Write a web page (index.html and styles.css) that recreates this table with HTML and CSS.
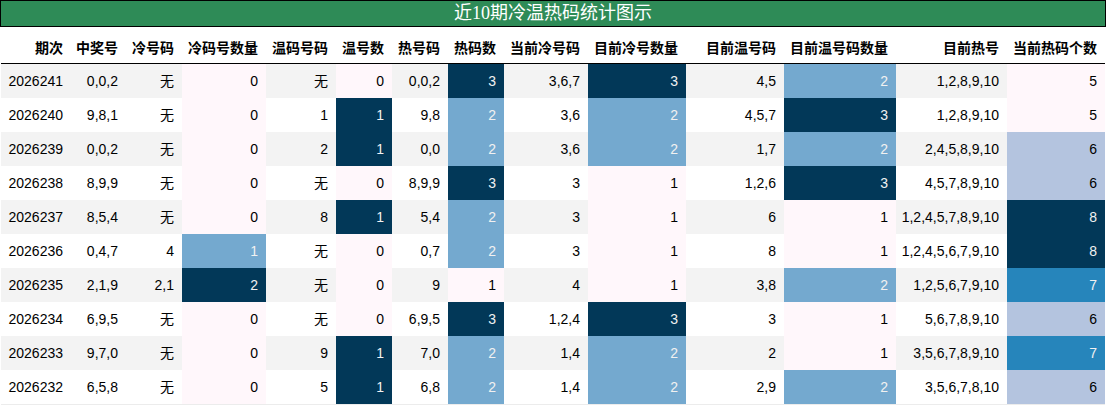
FILE: index.html
```html
<!DOCTYPE html>
<html lang="zh">
<head>
<meta charset="utf-8">
<title>近10期冷温热码统计图示</title>
<link rel="stylesheet" href="styles.css">
</head>
<body>
<div class="title">近10期冷温热码统计图示</div>
<table class="stats">
<colgroup>
<col class="w70"><col class="w55"><col class="w56"><col class="w84"><col class="w70"><col class="w56"><col class="w56"><col class="w56"><col class="w84"><col class="w98"><col class="w98"><col class="w112"><col class="w111"><col class="w98">
</colgroup>
<thead>
<tr><th>期次</th><th>中奖号</th><th>冷号码</th><th>冷码号数量</th><th>温码号码</th><th>温号数</th><th>热号码</th><th>热码数</th><th>当前冷号码</th><th>目前冷号数量</th><th>目前温号码</th><th>目前温号码数量</th><th>目前热号</th><th>当前热码个数</th></tr>
</thead>
<tbody>
<tr><td>2026241</td><td>0,0,2</td><td>无</td><td class="c0">0</td><td>无</td><td class="c0">0</td><td>0,0,2</td><td class="cn">3</td><td>3,6,7</td><td class="cn">3</td><td>4,5</td><td class="cl">2</td><td>1,2,8,9,10</td><td class="c0">5</td></tr>
<tr><td>2026240</td><td>9,8,1</td><td>无</td><td class="c0">0</td><td>1</td><td class="cn">1</td><td>9,8</td><td class="cl">2</td><td>3,6</td><td class="cl">2</td><td>4,5,7</td><td class="cn">3</td><td>1,2,8,9,10</td><td class="c0">5</td></tr>
<tr><td>2026239</td><td>0,0,2</td><td>无</td><td class="c0">0</td><td>2</td><td class="cn">1</td><td>0,0</td><td class="cl">2</td><td>3,6</td><td class="cl">2</td><td>1,7</td><td class="cl">2</td><td>2,4,5,8,9,10</td><td class="c6">6</td></tr>
<tr><td>2026238</td><td>8,9,9</td><td>无</td><td class="c0">0</td><td>无</td><td class="c0">0</td><td>8,9,9</td><td class="cn">3</td><td>3</td><td class="c0">1</td><td>1,2,6</td><td class="cn">3</td><td>4,5,7,8,9,10</td><td class="c6">6</td></tr>
<tr><td>2026237</td><td>8,5,4</td><td>无</td><td class="c0">0</td><td>8</td><td class="cn">1</td><td>5,4</td><td class="cl">2</td><td>3</td><td class="c0">1</td><td>6</td><td class="c0">1</td><td>1,2,4,5,7,8,9,10</td><td class="cn">8</td></tr>
<tr><td>2026236</td><td>0,4,7</td><td>4</td><td class="cl">1</td><td>无</td><td class="c0">0</td><td>0,7</td><td class="cl">2</td><td>3</td><td class="c0">1</td><td>8</td><td class="c0">1</td><td>1,2,4,5,6,7,9,10</td><td class="cn">8</td></tr>
<tr><td>2026235</td><td>2,1,9</td><td>2,1</td><td class="cn">2</td><td>无</td><td class="c0">0</td><td>9</td><td class="c0">1</td><td>4</td><td class="c0">1</td><td>3,8</td><td class="cl">2</td><td>1,2,5,6,7,9,10</td><td class="c7">7</td></tr>
<tr><td>2026234</td><td>6,9,5</td><td>无</td><td class="c0">0</td><td>无</td><td class="c0">0</td><td>6,9,5</td><td class="cn">3</td><td>1,2,4</td><td class="cn">3</td><td>3</td><td class="c0">1</td><td>5,6,7,8,9,10</td><td class="c6">6</td></tr>
<tr><td>2026233</td><td>9,7,0</td><td>无</td><td class="c0">0</td><td>9</td><td class="cn">1</td><td>7,0</td><td class="cl">2</td><td>1,4</td><td class="cl">2</td><td>2</td><td class="c0">1</td><td>3,5,6,7,8,9,10</td><td class="c7">7</td></tr>
<tr><td>2026232</td><td>6,5,8</td><td>无</td><td class="c0">0</td><td>5</td><td class="cn">1</td><td>6,8</td><td class="cl">2</td><td>1,4</td><td class="cl">2</td><td>2,9</td><td class="cl">2</td><td>3,5,6,7,8,10</td><td class="c6">6</td></tr>
</tbody>
</table>
</body>
</html>
```
FILE: styles.css
```css
html, body {
  margin: 0;
  padding: 0;
  background: #ffffff;
}

.title {
  box-sizing: border-box;
  width: 1106px;
  height: 27px;
  border: 1px solid #000000;
  background: #2e8b57;
  color: #ffffff;
  font-family: "Liberation Serif", "Noto Sans CJK SC", serif;
  font-size: 18px;
  line-height: 24px;
  text-align: center;
}

.stats {
  margin-left: 1px;
  width: 1104px;
  table-layout: fixed;
  border-collapse: collapse;
  border-spacing: 0;
  font-family: "Liberation Sans", "Noto Sans CJK SC", sans-serif;
  font-size: 14px;
  color: #000000;
  border-bottom: 1px solid #ececec;
}

.w55 { width: 55px; }
.w56 { width: 56px; }
.w70 { width: 70px; }
.w84 { width: 84px; }
.w98 { width: 98px; }
.w111 { width: 111px; }
.w112 { width: 112px; }

.stats th {
  box-sizing: border-box;
  height: 36px;
  padding: 12px 8px 7px 0;
  line-height: 16px;
  text-align: right;
  font-weight: bold;
  font-family: "Noto Sans CJK SC", "Liberation Sans", sans-serif;
  font-size: 14px;
  white-space: nowrap;
  border-bottom: 1px solid #000000;
  background: #ffffff;
}

.stats td {
  box-sizing: border-box;
  height: 34px;
  padding: 0 8px 0 0;
  line-height: 34px;
  text-align: right;
  white-space: nowrap;
  background: #ffffff;
}

.stats tbody tr:nth-child(odd) td {
  background: #f3f3f3;
}

.stats tbody tr td.c0 { background: #fff7fb; color: #000000; }
.stats tbody tr td.cl { background: #74a9cf; color: #f1f1f1; }
.stats tbody tr td.cn { background: #023858; color: #f1f1f1; }
.stats tbody tr td.c6 { background: #b4c4df; color: #000000; }
.stats tbody tr td.c7 { background: #2685bb; color: #f1f1f1; }
```
